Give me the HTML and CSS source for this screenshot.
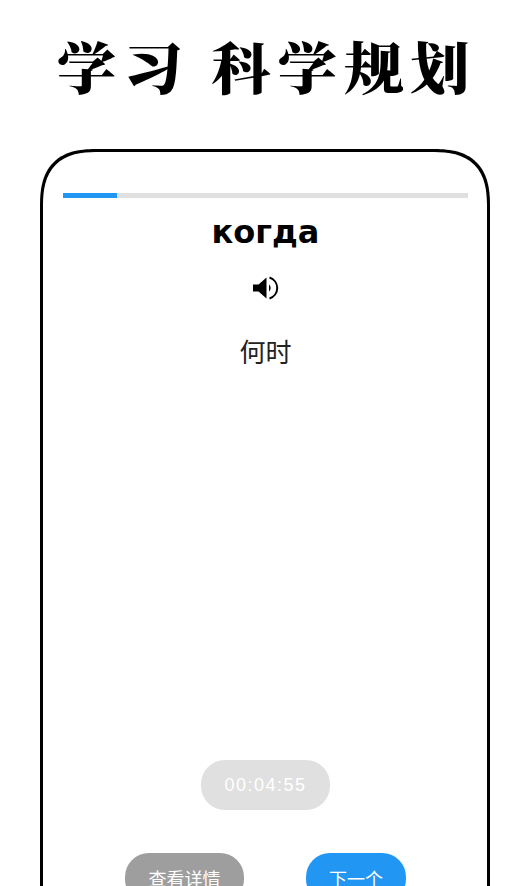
FILE: index.html
```html
<!DOCTYPE html>
<html lang="zh">
<head>
<meta charset="utf-8">
<title>学习 科学规划</title>
<link rel="stylesheet" href="styles.css">
</head>
<body>
<main class="screen">
  <h1 class="headline">学习 科学规划</h1>
  <section class="phone">
    <div class="progress"><div class="progress-fill"></div></div>
    <h2 class="word">когда</h2>
    <svg class="speaker" viewBox="0 0 28 28" width="28" height="28" aria-hidden="true">
      <path class="speaker-body" d="M1 10.5h5.5L14.5 3.5v21L6.5 17.5H1z"/>
      <path class="speaker-wave" d="M17 10.5a4.5 4.5 0 0 1 0 7z"/>
      <path class="speaker-arc" d="M17.5 3.5a11 11 0 0 1 0 21"/>
    </svg>
    <p class="meaning">何时</p>
    <div class="timer">00:04:55</div>
    <div class="actions">
      <button class="btn btn-grey">查看详情</button>
      <button class="btn btn-blue">下一个</button>
    </div>
  </section>
</main>
</body>
</html>
```
FILE: styles.css
```css
html, body {
  margin: 0;
  padding: 0;
  height: 100%;
  background: #fff;
  overflow: hidden;
}
.screen {
  display: flex;
  flex-direction: column;
  height: 886px;
  overflow: hidden;
  font-family: "Noto Sans CJK SC", "Noto Sans", sans-serif;
}
.headline {
  flex: none;
  margin: 0;
  padding: 23px 0 0 9px;
  height: 149px;
  box-sizing: border-box;
  font-family: "Noto Serif CJK SC", "Noto Sans CJK SC", serif;
  font-size: 56px;
  line-height: 84px;
  font-weight: 900;
  letter-spacing: 6.6px;
  text-align: center;
  color: #000;
  white-space: nowrap;
  transform: scaleX(1.06);
}
.phone {
  box-sizing: border-box;
  flex: none;
  width: 450px;
  height: 800px;
  margin-left: 40px;
  padding: 41px 18.5px 0 19.5px;
  border: 3.5px solid #000;
  border-radius: 58px;
  corner-shape: superellipse(1.4);
  display: flex;
  flex-direction: column;
  align-items: center;
}
.progress {
  align-self: stretch;
  height: 5px;
  margin-right: 1px;
  background: #e0e0e0;
}
.progress-fill {
  width: 54px;
  height: 100%;
  background: #2196f3;
}
.word {
  margin: 14px 0 0;
  font-family: "DejaVu Sans", sans-serif;
  font-size: 32px;
  line-height: 40px;
  font-weight: 700;
  color: #000;
}
.speaker {
  margin-top: 22px;
}
.speaker-body, .speaker-wave {
  fill: #000;
}
.speaker-arc {
  fill: none;
  stroke: #000;
  stroke-width: 2;
}
.meaning {
  margin: 30px 0 0;
  font-size: 26px;
  line-height: 38px;
  color: #222;
}
.timer {
  margin-top: 390px;
  width: 129px;
  height: 50px;
  border-radius: 24px;
  background: #e0e0e0;
  color: #fff;
  font-family: "Liberation Sans", sans-serif;
  font-size: 18px;
  letter-spacing: 1.5px;
  line-height: 50px;
  text-align: center;
}
.actions {
  display: flex;
  gap: 62px;
  margin-top: 43px;
}
.btn {
  border: 0;
  padding: 0;
  height: 50px;
  border-radius: 24px;
  color: #fff;
  font-family: inherit;
  font-size: 18px;
}
.btn-grey {
  width: 119px;
  background: #9e9e9e;
}
.btn-blue {
  width: 100px;
  background: #2196f3;
}
```
